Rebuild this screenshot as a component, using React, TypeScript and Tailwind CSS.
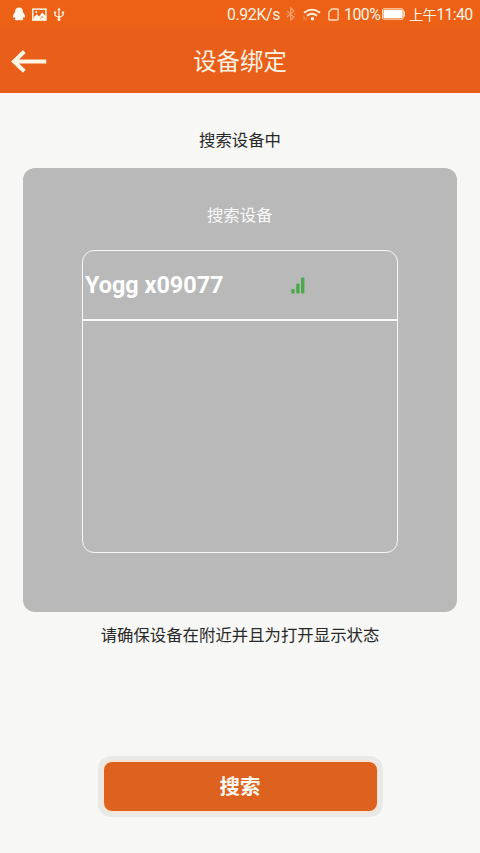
import type { ReactNode } from "react";

function StatusBar() {
  return (
    <div className="flex h-7 items-center bg-[#ec6115] text-[#fff3e4]">
      <svg className="ml-[12px] h-[14px] w-[14px] shrink-0" viewBox="0 0 14 14" fill="#fffaf0">
        <path d="M7 .5C4.200.5 2.800 2.600 2.800 5.400 1.600 7 .8 8.500 1 10.200c.2.5.8.3 1.300-.2.3.8.6 1.300 1.200 1.800-.7.300-.8.600-.8 1 0 .5 2.600.6 4.300.2 1.700.4 4.300.3 4.300-.2 0-.4-.1-.7-.8-1 .6-.5.9-1 1.200-1.800.5.5 1.100.7 1.300.2.2-1.700-.6-3.200-1.800-4.800C11.200 2.600 9.800.5 7 .5Z" />
      </svg>
      <svg className="ml-[6px] h-[13px] w-[15px] shrink-0" viewBox="0 0 15 13" fill="none">
        <rect x=".8" y="1.100" width="13.200" height="11" stroke="#fffaf0" strokeWidth="1.400" />
        <path d="M1.500 12V9.500l3.300-3.200 2.300 2.300 3.100-4 3.800 4V12Z" fill="#fffaf0" />
        <circle cx="4.300" cy="3.900" r="1" fill="#fffaf0" />
        <path d="m8.500 10.500 1.800-2 1 1.500" stroke="#ee6314" strokeWidth=".8" />
      </svg>
      <svg className="ml-[6px] h-[15px] w-[12px] shrink-0" viewBox="0 0 12 15" fill="none" stroke="#fff3e4" strokeWidth="1.200">
        <path d="M6 2v10M6 10.500 2 8.500V5.500M6 10.500l4-2V5.500" />
        <path d="M6 .5 7.800 3.200H4.200Z" fill="#fff3e4" stroke="none" />
        <circle cx="6" cy="12.500" r="1.500" fill="#fff3e4" stroke="none" />
        <path d="M.9 4.400h2.300v2.200H.9ZM8.800 4.400h2.300v2.200H8.800Z" fill="#fff3e4" stroke="none" />
      </svg>
      <span className="ml-[162px] mt-px w-[53px] shrink-0 whitespace-nowrap font-[Roboto,sans-serif] text-[15.800px] leading-7 tracking-[-0.35px]">0.92K/s</span>
      <svg className="ml-[6px] h-[14px] w-[10px] shrink-0" viewBox="0 0 10 14" fill="none" stroke="#f9a16c" strokeWidth="1.200">
        <path d="m1 4 7 6-3.300 3V1L8 4l-7 6M.3 7h1M8.500 7h1" />
      </svg>
      <svg className="ml-[7px] h-[13px] w-[18px] shrink-0" viewBox="0 0 18 13" fill="none" stroke="#fff3e4" strokeWidth="1.800">
        <path d="M1 4.700Q9-1.500 17 4.700M4 7.800q5-4 10 0" />
        <circle cx="9.500" cy="10.800" r="1.700" fill="#fff3e4" stroke="none" />
        <path d="M1 7.500v4M3 9.500v3" stroke="#f9a16c" strokeWidth=".9" />
      </svg>
      <svg className="ml-[7px] h-[13px] w-[11px] shrink-0" viewBox="0 0 11 13" fill="none" stroke="#ffdfc1" strokeWidth="1.300">
        <path d="M3.800 1H9.300q.8 0 .8.8v9.400q0 .8-.8.8H1.700q-.8 0-.8-.8V4Z" />
      </svg>
      <span className="ml-[5px] mt-px w-[38px] shrink-0 whitespace-nowrap font-[Roboto,sans-serif] text-[15.800px] leading-7 tracking-[-0.5px]">100%</span>
      <svg className="h-[12px] w-[24px] shrink-0" viewBox="0 0 24 12">
        <rect x=".5" y=".8" width="20.700" height="10.400" rx="1" fill="none" stroke="#ffdfc1" />
        <path d="M1.500 1.800h19v8.400h-19Z" fill="#fff" />
        <path d="M21.500 3.500H23v5h-1.500Z" fill="#ffdfc1" />
      </svg>
      <span className="ml-[3px] mt-px flex shrink-0 items-baseline whitespace-nowrap font-[Roboto,'Noto_Sans_CJK_SC',sans-serif] text-[15.800px] leading-7 tracking-[-0.6px]">
        <span className="text-[14.200px]">上午</span>
        <span>11:40</span>
      </span>
    </div>
  );
}

function Header({ children }: { children: ReactNode }) {
  return (
    <header className="grid h-[65px] grid-cols-[60px_1fr_60px] items-center bg-[#e95f19]">
      <button aria-label="返回" className="ml-[11px] h-6 w-9">
        <svg className="h-6 w-9" viewBox="0 0 36 24" fill="none" stroke="#fff5e4" strokeWidth="4">
          <path d="M35.300 12.500H3M13.300 2.500 3 12.500l10.300 9.800" />
        </svg>
      </button>
      <h1 className="pt-[2px] text-center text-[23.400px] leading-8 text-[#fff3e4]">{children}</h1>
    </header>
  );
}

export default function App() {
  return (
    <div className="flex h-[853px] w-[480px] flex-col overflow-hidden bg-[#f7f7f5] font-[Roboto,'Noto_Sans_CJK_SC',sans-serif]">
      <StatusBar />
      <Header>设备绑定</Header>
      <p className="mt-[36px] text-center text-[16.400px] leading-6 text-[#292929]">搜索设备中</p>
      <main className="ml-[23px] mt-[15px] h-[444px] w-[433.500px] rounded-[12px] bg-[#b9b9b9] px-[59px] pt-[36px]">
        <h2 className="text-center text-[16.400px] leading-6 text-[#f9f9f9]">搜索设备</h2>
        <div className="mt-[22px] h-[303px] w-[316px] rounded-[12px] border border-[#f7f7f7]">
          <div className="flex h-[70px] items-center border-b-2 border-[#f8f8f8]">
            <span className="ml-[2px] w-[206px] whitespace-nowrap text-[23.400px] font-bold leading-8 text-white">Yogg x09077</span>
            <svg className="-mt-px h-[18px] w-[15px]" viewBox="0 0 15 18" fill="#4ba84b">
              <rect x=".3" y="13" width="3.400" height="4.500" rx="1" />
              <rect x="5.200" y="7.500" width="3.400" height="10" rx="1" />
              <rect x="10" y="1.500" width="3.400" height="16" rx="1" />
            </svg>
          </div>
        </div>
      </main>
      <p className="mt-[12px] text-center text-[16.400px] leading-6 text-[#292929]">请确保设备在附近并且为打开显示状态</p>
      <div className="mx-auto mt-[108px] rounded-[13px] bg-[#e9e9e7] p-1">
        <button className="block h-[53px] w-[277px] rounded-[10px] border-2 border-[#fae5d4] bg-[#dd611f] pt-[2px] text-[20.500px] font-bold text-[#fff8ef]">搜索</button>
      </div>
    </div>
  );
}
